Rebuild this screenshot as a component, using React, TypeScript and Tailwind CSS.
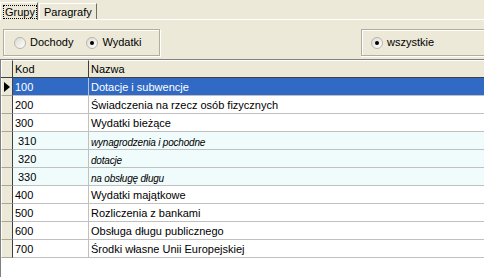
import React from "react";

const rows = [
  { code: "100", name: "Dotacje i subwencje", sub: false },
  { code: "200", name: "Świadczenia na rzecz osób fizycznych", sub: false },
  { code: "300", name: "Wydatki bieżące", sub: false },
  { code: "310", name: "wynagrodzenia i pochodne", sub: true },
  { code: "320", name: "dotacje", sub: true },
  { code: "330", name: "na obsługę długu", sub: true },
  { code: "400", name: "Wydatki majątkowe", sub: false },
  { code: "500", name: "Rozliczenia z bankami", sub: false },
  { code: "600", name: "Obsługa długu publicznego", sub: false },
  { code: "700", name: "Środki własne Unii Europejskiej", sub: false },
];

function Radio({ checked, label }: { checked: boolean; label: string }) {
  return (
    <div className="flex items-center">
      <div className="w-[12px] h-[12px] rounded-full border border-[#b8b6ac] bg-gradient-to-br from-[#dcdad2] to-white flex items-center justify-center">
        {checked && <div className="w-[4px] h-[4px] rounded-full bg-black" />}
      </div>
      <span className="ml-[4px]">{label}</span>
    </div>
  );
}

export default function App() {
  return (
    <div
      className="w-[484px] h-[277px] bg-[#ECE9D8] overflow-hidden flex flex-col text-[11px] leading-[13px] text-black"
      style={{ fontFamily: '"Liberation Sans", Arial, sans-serif' }}
    >
      {/* Tabs */}
      <div className="h-[20px] flex items-end border-b border-white">
        <div className="h-[18px] w-[38px] border-l border-t border-white border-r border-r-[#716f64] bg-[#ECE9D8] -mb-[1px] flex items-start pt-[2px] pl-[2px] relative z-10">
          <span className="border border-dotted border-black px-[1px] leading-[11px] h-[14px] pt-[1px]">Grupy</span>
        </div>
        <div className="h-[16px] w-[58px] ml-[1px] border-l border-t border-white border-r border-r-[#716f64] flex items-start pt-[2px] pl-[4px]">
          Paragrafy
        </div>
      </div>
      {/* Group boxes */}
      <div className="flex justify-between items-start pt-[9px] pl-[3px] h-[39px]">
        <div className="w-[157px] h-[27px] border border-[#b0ae9f] shadow-[inset_1px_1px_0_#fff,1px_1px_0_#fff] flex items-center pl-[10px] gap-[13px]">
          <Radio checked={false} label="Dochody" />
          <Radio checked={true} label="Wydatki" />
        </div>
        <div className="w-[123px] h-[27px] border border-r-0 border-[#b0ae9f] shadow-[inset_1px_1px_0_#fff,0_1px_0_#fff] flex items-center pl-[9px]">
          <Radio checked={true} label="wszystkie" />
        </div>
      </div>
      {/* Grid */}
      <div className="flex-1 bg-white border-t border-l border-[#808080] flex flex-col">
        <div className="flex h-[18px] bg-[#ECE9D8] border-b border-[#404040]">
          <div className="w-[12px] border-t border-l border-white border-r border-r-[#404040]" />
          <div className="w-[76px] border-t border-white border-r border-r-[#404040] pl-[2px] pt-[2px]">Kod</div>
          <div className="flex-1 border-t border-white pl-[2px] pt-[2px]">Nazwa</div>
        </div>
        {rows.map((r, i) => {
          const sel = i === 0;
          const bg = sel ? "bg-[#316AC5] text-white" : r.sub ? "bg-[#f0fbfb]" : "bg-white";
          return (
            <div key={r.code} className="flex h-[18px]">
              <div className="w-[12px] bg-[#ECE9D8] border-l border-white border-b border-b-[#aca899] border-r border-r-[#404040] flex items-center">
                {sel && (
                  <svg width="6" height="10" viewBox="0 0 6 10" className="ml-[2px]">
                    <path d="M0 0 L6 5 L0 10 Z" fill="#000" />
                  </svg>
                )}
              </div>
              <div className={`w-[76px] border-b border-r border-[#c0c0c0] ${bg} pt-[3px] ${r.sub ? "pl-[5px]" : "pl-[2px]"}`}>
                {r.code}
              </div>
              <div className={`flex-1 border-b border-[#c0c0c0] ${bg} pl-[2px] ${r.sub ? "italic text-[10px] pt-[4px] tracking-[-0.2px]" : "pt-[3px]"}`}>
                {r.name}
              </div>
            </div>
          );
        })}
      </div>
    </div>
  );
}
